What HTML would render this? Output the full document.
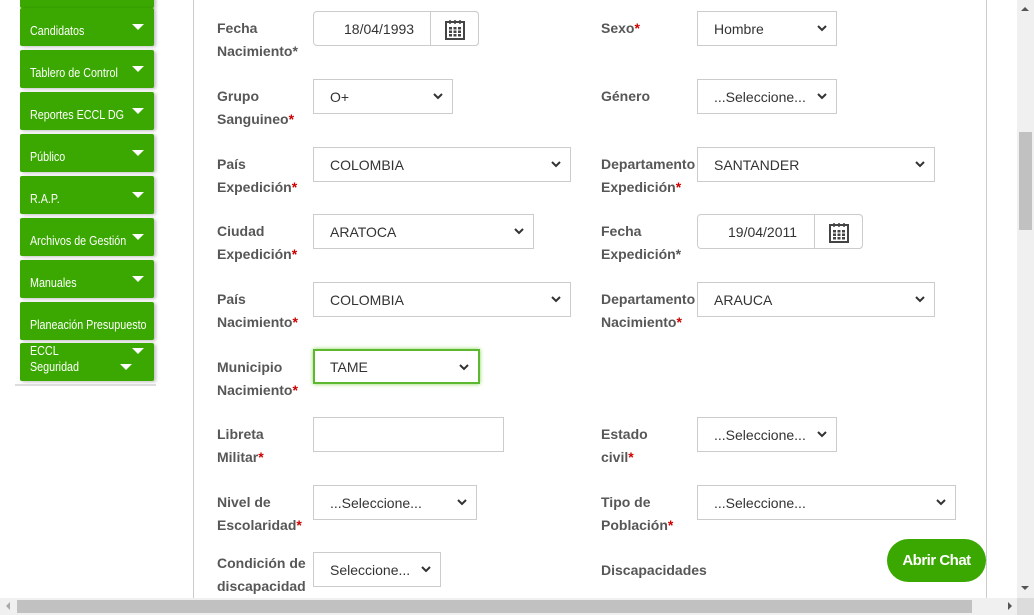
<!DOCTYPE html>
<html><head><meta charset="utf-8"><style>
*{margin:0;padding:0;box-sizing:border-box}
body{width:1034px;height:615px;overflow:hidden;background:#fff;position:relative;font-family:"Liberation Sans",sans-serif}
.a{position:absolute}
.nav{position:absolute;left:20px;width:134px;height:38px;background:#3aa800;border-radius:2px;color:#fff;font-size:12.5px;line-height:1;box-shadow:2px 1px 3px rgba(0,0,0,0.25)}
.nav span{position:absolute;left:10px;top:17px;transform:scaleX(0.86);transform-origin:left;white-space:nowrap}
.nav i{position:absolute;right:10px;top:16px;width:0;height:0;border-left:6px solid transparent;border-right:6px solid transparent;border-top:6px solid #fff}
.l{position:absolute;font-size:14px;font-weight:bold;color:#575757;line-height:23px}
.r{color:#c00}
.b{position:absolute;border:1px solid #ccc;background:#fff;font-size:14px;color:#333;padding-left:16px;padding-top:1px;line-height:33px;height:35px}
.b svg{position:absolute;right:9px;top:13px}
.cal{position:absolute;top:-1px;right:-1px;width:49px;height:35px;border:1px solid #ccc;border-radius:0 4px 4px 0;background:#fff}
.cal svg{left:14px;top:7px;right:auto}
</style></head><body>
<div class="nav" style="top:-30px"></div>
<div class="nav" style="top:8px"><span>Candidatos</span><i></i></div>
<div class="nav" style="top:50px"><span>Tablero de Control</span><i></i></div>
<div class="nav" style="top:92px"><span>Reportes ECCL DG</span><i></i></div>
<div class="nav" style="top:134px"><span>Público</span><i></i></div>
<div class="nav" style="top:176px"><span>R.A.P.</span><i></i></div>
<div class="nav" style="top:218px"><span>Archivos de Gestión</span><i></i></div>
<div class="nav" style="top:260px"><span>Manuales</span><i></i></div>
<div class="nav" style="top:302px"><span>Planeación Presupuesto</span></div>
<div class="nav" style="top:343px"><span style="top:2px">ECCL</span><span style="top:18px">Seguridad</span><i style="top:5px"></i><i style="top:21px;right:22px"></i></div>
<div class="a" style="left:15px;top:384px;width:141px;height:2px;background:#ddd"></div>

<div class="a" style="left:193px;top:0;width:1px;height:598px;background:#ccc"></div>
<div class="a" style="left:986px;top:0;width:1px;height:598px;background:#ccc"></div>

<div class="l" style="left:217px;top:17px">Fecha<br>Nacimiento*</div>
<div class="b" style="left:313px;top:11px;width:166px;border-radius:4px;padding-left:30px">18/04/1993<div class="cal"><svg class="a" width="20" height="21" viewBox="0 0 20 21"><rect x="1" y="3" width="18" height="17" fill="none" stroke="#444" stroke-width="2"/><path d="M5 1v4M10 1v4M15 1v4" stroke="#444" stroke-width="1.5"/><g fill="#444"><rect x="4" y="8" width="3" height="2.5"/><rect x="8.5" y="8" width="3" height="2.5"/><rect x="13" y="8" width="3" height="2.5"/><rect x="4" y="11.5" width="3" height="2.5"/><rect x="8.5" y="11.5" width="3" height="2.5"/><rect x="13" y="11.5" width="3" height="2.5"/><rect x="4" y="15" width="3" height="2.5"/><rect x="8.5" y="15" width="3" height="2.5"/><rect x="13" y="15" width="3" height="2.5"/></g></svg></div></div>
<div class="l" style="left:601px;top:17px">Sexo<span class="r">*</span></div>
<div class="b" style="left:697px;top:11px;width:140px">Hombre<svg width="10" height="7"><path d="M1 1l4 4 4-4" stroke="#333" stroke-width="2" fill="none"/></svg></div>

<div class="l" style="left:217px;top:85px">Grupo<br>Sanguineo<span class="r">*</span></div>
<div class="b" style="left:313px;top:79px;width:140px">O+<svg width="10" height="7"><path d="M1 1l4 4 4-4" stroke="#333" stroke-width="2" fill="none"/></svg></div>
<div class="l" style="left:601px;top:85px">Género</div>
<div class="b" style="left:697px;top:79px;width:140px">...Seleccione...<svg width="10" height="7"><path d="M1 1l4 4 4-4" stroke="#333" stroke-width="2" fill="none"/></svg></div>

<div class="l" style="left:217px;top:153px">País<br>Expedición<span class="r">*</span></div>
<div class="b" style="left:313px;top:147px;width:258px">COLOMBIA<svg width="10" height="7"><path d="M1 1l4 4 4-4" stroke="#333" stroke-width="2" fill="none"/></svg></div>
<div class="l" style="left:601px;top:153px">Departamento<br>Expedición<span class="r">*</span></div>
<div class="b" style="left:697px;top:147px;width:238px">SANTANDER<svg width="10" height="7"><path d="M1 1l4 4 4-4" stroke="#333" stroke-width="2" fill="none"/></svg></div>

<div class="l" style="left:217px;top:220px">Ciudad<br>Expedición<span class="r">*</span></div>
<div class="b" style="left:313px;top:214px;width:221px">ARATOCA<svg width="10" height="7"><path d="M1 1l4 4 4-4" stroke="#333" stroke-width="2" fill="none"/></svg></div>
<div class="l" style="left:601px;top:220px">Fecha<br>Expedición*</div>
<div class="b" style="left:697px;top:214px;width:166px;border-radius:4px;padding-left:30px">19/04/2011<div class="cal"><svg class="a" width="20" height="21" viewBox="0 0 20 21"><rect x="1" y="3" width="18" height="17" fill="none" stroke="#444" stroke-width="2"/><path d="M5 1v4M10 1v4M15 1v4" stroke="#444" stroke-width="1.5"/><g fill="#444"><rect x="4" y="8" width="3" height="2.5"/><rect x="8.5" y="8" width="3" height="2.5"/><rect x="13" y="8" width="3" height="2.5"/><rect x="4" y="11.5" width="3" height="2.5"/><rect x="8.5" y="11.5" width="3" height="2.5"/><rect x="13" y="11.5" width="3" height="2.5"/><rect x="4" y="15" width="3" height="2.5"/><rect x="8.5" y="15" width="3" height="2.5"/><rect x="13" y="15" width="3" height="2.5"/></g></svg></div></div>

<div class="l" style="left:217px;top:288px">País<br>Nacimiento<span class="r">*</span></div>
<div class="b" style="left:313px;top:282px;width:258px">COLOMBIA<svg width="10" height="7"><path d="M1 1l4 4 4-4" stroke="#333" stroke-width="2" fill="none"/></svg></div>
<div class="l" style="left:601px;top:288px">Departamento<br>Nacimiento<span class="r">*</span></div>
<div class="b" style="left:697px;top:282px;width:238px">ARAUCA<svg width="10" height="7"><path d="M1 1l4 4 4-4" stroke="#333" stroke-width="2" fill="none"/></svg></div>

<div class="l" style="left:217px;top:356px">Municipio<br>Nacimiento<span class="r">*</span></div>
<div class="b" style="left:313px;top:349px;width:167px;border:2px solid #5cb82e;box-shadow:0 0 4px #8cd45c;line-height:31px;padding-left:15px">TAME<svg width="10" height="7"><path d="M1 1l4 4 4-4" stroke="#333" stroke-width="2" fill="none"/></svg></div>

<div class="l" style="left:217px;top:423px">Libreta<br>Militar<span class="r">*</span></div>
<div class="b" style="left:313px;top:417px;width:191px"></div>
<div class="l" style="left:601px;top:423px">Estado<br>civil<span class="r">*</span></div>
<div class="b" style="left:697px;top:417px;width:140px">...Seleccione...<svg width="10" height="7"><path d="M1 1l4 4 4-4" stroke="#333" stroke-width="2" fill="none"/></svg></div>

<div class="l" style="left:217px;top:491px">Nivel de<br>Escolaridad<span class="r">*</span></div>
<div class="b" style="left:313px;top:485px;width:164px">...Seleccione...<svg width="10" height="7"><path d="M1 1l4 4 4-4" stroke="#333" stroke-width="2" fill="none"/></svg></div>
<div class="l" style="left:601px;top:491px">Tipo de<br>Población<span class="r">*</span></div>
<div class="b" style="left:697px;top:485px;width:259px">...Seleccione...<svg width="10" height="7"><path d="M1 1l4 4 4-4" stroke="#333" stroke-width="2" fill="none"/></svg></div>

<div class="l" style="left:217px;top:552px">Condición de<br>discapacidad</div>
<div class="b" style="left:313px;top:552px;width:128px;padding-left:16px">Seleccione...<svg width="10" height="7"><path d="M1 1l4 4 4-4" stroke="#333" stroke-width="2" fill="none"/></svg></div>
<div class="l" style="left:601px;top:559px">Discapacidades</div>

<div class="a" style="left:887px;top:539px;width:99px;height:43px;border-radius:22px;background:#3aa800;color:#fff;font-weight:bold;font-size:15px;letter-spacing:-0.5px;text-align:center;line-height:43px">Abrir Chat</div>

<div class="a" style="left:1017px;top:0;width:17px;height:598px;background:#f0f0f0"></div>
<div class="a" style="left:1019px;top:132px;width:13px;height:98px;background:#c1c1c1"></div>
<div class="a" style="left:1021px;top:7px;width:0;height:0;border-left:4px solid transparent;border-right:4px solid transparent;border-bottom:4px solid #555"></div>
<div class="a" style="left:1021px;top:586px;width:0;height:0;border-left:4px solid transparent;border-right:4px solid transparent;border-top:4px solid #555"></div>
<div class="a" style="left:0;top:598px;width:1034px;height:17px;background:#f0f0f0"></div>
<div class="a" style="left:17px;top:600px;width:955px;height:13px;background:#c1c1c1"></div>
<div class="a" style="left:6px;top:602px;width:0;height:0;border-top:4px solid transparent;border-bottom:4px solid transparent;border-right:4px solid #aaa"></div>
<div class="a" style="left:1008px;top:602px;width:0;height:0;border-top:4px solid transparent;border-bottom:4px solid transparent;border-left:4px solid #555"></div>
<div class="a" style="left:1017px;top:598px;width:17px;height:17px;background:#dcdcdc"></div>
</body></html>
